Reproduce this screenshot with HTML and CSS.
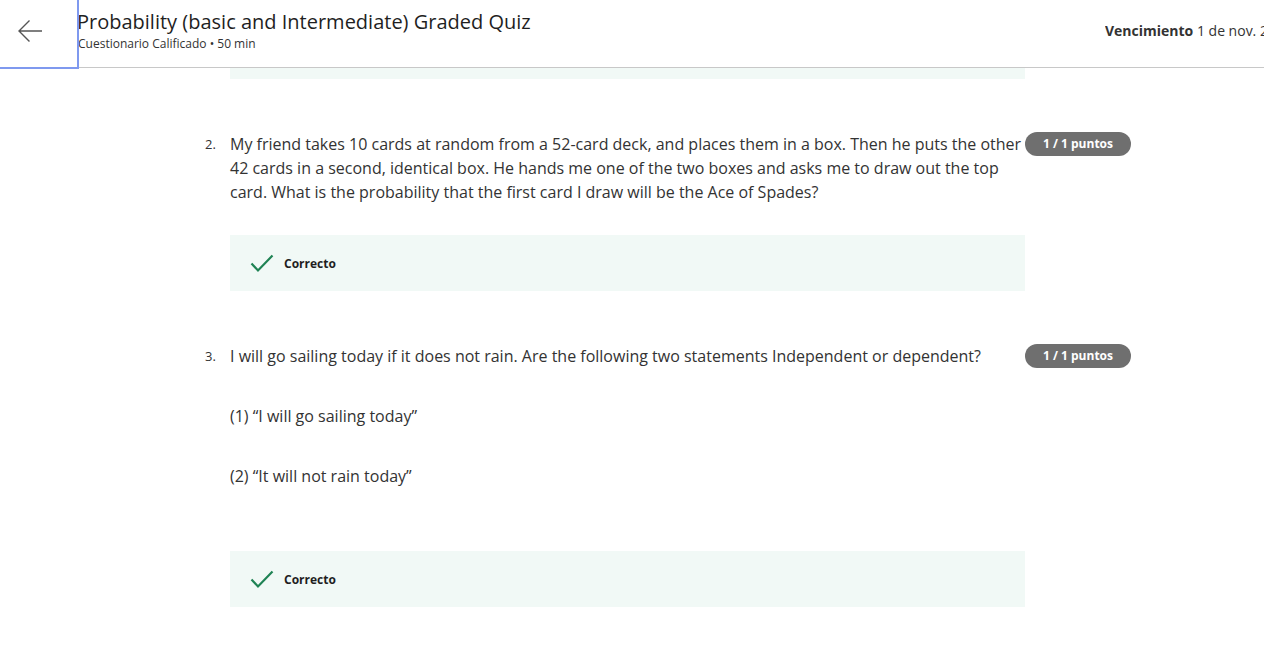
FILE: index.html
```html
<!DOCTYPE html>
<html lang="es">
<head>
<meta charset="utf-8">
<title>Probability Graded Quiz</title>
<link rel="stylesheet" href="styles.css">
</head>
<body>
<header class="topbar">
  <button class="back" aria-label="Volver">
    <svg width="26" height="24" viewBox="0 0 26 24"><path d="M25 12H2M12.5 1.5L2 12l10.5 10.5" fill="none" stroke="#555" stroke-width="1.4"/></svg>
  </button>
  <div class="titles">
    <h1 class="title">Probability (basic and Intermediate) Graded Quiz</h1>
    <div class="subtitle">Cuestionario Calificado • 50 min</div>
  </div>
  <div class="due"><b>Vencimiento</b> 1 de nov. 23:59 -03</div>
</header>
<main class="content">
  <div class="feedback stub"></div>

  <section class="question">
    <div class="qhead">
      <span class="num">2.</span>
      <div class="qtext">
        <p>My friend takes 10 cards at random from a 52-card deck, and places them in a box. Then he puts the other 42 cards in a second, identical box. He hands me one of the two boxes and asks me to draw out the top card. What is the probability that the first card I draw will be the Ace of Spades?</p>
      </div>
      <span class="badge">1 / 1 puntos</span>
    </div>
    <div class="feedback">
      <svg class="check" width="24" height="24" viewBox="0 0 24 24"><path d="M1.5 12.5l6.5 7 14.5-15" fill="none" stroke="#1f8354" stroke-width="2.2"/></svg>
      <span>Correcto</span>
    </div>
  </section>

  <section class="question">
    <div class="qhead">
      <span class="num">3.</span>
      <div class="qtext">
        <p>I will go sailing today if it does not rain. Are the following two statements Independent or dependent?</p>
        <p class="item">(1) “I will go sailing today”</p>
        <p class="item">(2) “It will not rain today”</p>
      </div>
      <span class="badge">1 / 1 puntos</span>
    </div>
    <div class="feedback gap">
      <svg class="check" width="24" height="24" viewBox="0 0 24 24"><path d="M1.5 12.5l6.5 7 14.5-15" fill="none" stroke="#1f8354" stroke-width="2.2"/></svg>
      <span>Correcto</span>
    </div>
  </section>
</main>
</body>
</html>
```
FILE: styles.css
```css
html, body {
  margin: 0;
  padding: 0;
  background: #fff;
  overflow: hidden;
}
body {
  font-family: "Open Sans", "Liberation Sans", sans-serif;
  color: #333;
  width: 1264px;
}
.topbar {
  display: flex;
  align-items: flex-start;
  height: 67px;
  border-bottom: 1px solid #c8c8c8;
  background: #fff;
  white-space: nowrap;
}
.back {
  width: 79px;
  height: 69px;
  flex: 0 0 79px;
  box-sizing: border-box;
  margin: 0 -2px 0 0;
  padding: 0 0 5px 17px;
  background: #fff;
  border: none;
  border-right: 2px solid #7f99ef;
  border-bottom: 2px solid #7f99ef;
  display: flex;
  align-items: center;
  justify-content: flex-start;
  position: relative;
  z-index: 1;
}
.titles {
  flex: 1 1 auto;
  padding-top: 8px;
}
.title {
  margin: 0;
  font-size: 20px;
  font-weight: 400;
  line-height: 28px;
  color: #1f1f1f;
}
.subtitle {
  font-size: 12px;
  line-height: 16px;
  color: #333;
  margin-left: 1px;
}
.due {
  flex: 0 0 auto;
  width: 159px;
  overflow: hidden;
  font-size: 14px;
  line-height: 20px;
  padding-top: 21px;
  color: #333;
}
.due b { font-weight: 700; }
.content {
  margin-left: 230px;
  width: 901px;
}
.feedback {
  width: 795px;
  height: 56px;
  box-sizing: border-box;
  background: #f1f9f6;
  display: flex;
  align-items: center;
  padding-left: 20px;
  font-size: 12px;
  font-weight: 700;
  color: #1f1f1f;
}
.feedback.stub { height: 11px; }
.check { margin-right: 10px; }
.question { margin-top: 53px; }
.qhead {
  display: flex;
  align-items: flex-start;
  position: relative;
}
.num {
  position: absolute;
  left: -25px;
  top: 0;
  font-size: 13px;
  line-height: 24px;
}
.qtext {
  width: 795px;
  font-size: 16px;
  line-height: 24px;
}
.qtext p { margin: 0; }
.qtext p.item { margin-top: 36px; }
.badge {
  width: 106px;
  height: 24px;
  border-radius: 12px;
  background: #6f6f6f;
  color: #fff;
  font-size: 12px;
  font-weight: 700;
  line-height: 24px;
  text-align: center;
  flex: 0 0 auto;
}
.question .qhead + .feedback { margin-top: 31px; }
.question .qhead + .feedback.gap { margin-top: 63px; }
```
